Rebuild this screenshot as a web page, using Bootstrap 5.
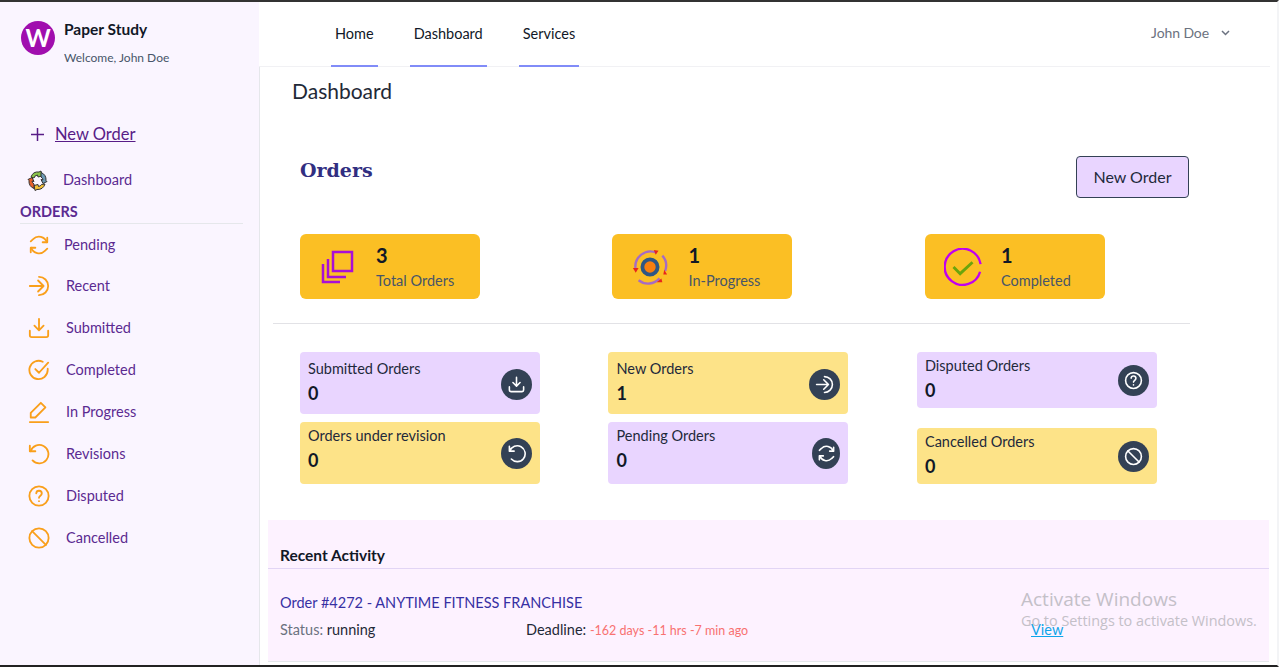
<!DOCTYPE html>
<html lang="en">
<head>
  <meta charset="UTF-8" />
  <meta name="viewport" content="width=device-width, initial-scale=1.0"/>
  <title>Dashboard - Paper Study</title>
  <link href="https://cdn.jsdelivr.net/npm/bootstrap@5.3.0/dist/css/bootstrap.min.css" rel="stylesheet"/>
  <style>
    html, body { height: 100%; }
    body { font-family: Lato, "Open Sans", sans-serif; overflow: hidden; border-top: 2px solid #333; border-bottom: 2px solid #222; border-right: 2px solid #f3f4f6; color: #1e293b; background: #fff; }
    .app-wrap { height: 663px; }

    /* sidebar */
    .side { width: 259px; flex: none; background: #faf5ff; color: #5b2a91; }
    .brand { padding: 19px 0 0 21px; height: 114px; gap: 9px; }
    .brand-logo { width: 34px; height: 34px; background: #a00eae; color: #fff; font-size: 24px; font-weight: 700; line-height: 34px; }
    .brand-name { font-size: 15.5px; font-weight: 700; color: #111827; line-height: 20px; margin-top: -2px; }
    .brand-sub { font-size: 12px; color: #475569; margin-top: 10px; line-height: 18px; }
    .side-new { padding-left: 30px; height: 36px; font-size: 16.5px; gap: 10px; }
    .side-new a { color: #581c87; }
    .side-dash { padding-left: 27px; height: 42px; margin-top: 7px; font-size: 14.5px; gap: 15px; }
    .side-head { margin: 1px 16px 0 20px; padding-bottom: 1px; border-bottom: 1px solid #e5e7eb; font-size: 14.5px; font-weight: 700; line-height: 20px; height: 22px; }
    .side-list { margin: 0; padding: 1px 0 0; list-style: none; }
    .side-list li { height: 42px; padding-left: 28px; font-size: 14.5px; gap: 16px; }
    .side-list li:first-child { height: 40px; gap: 14px; }
    .side-list svg { width: 22px; height: 22px; flex: none; fill: none; stroke: #f99f1b; stroke-width: 2; stroke-linecap: round; stroke-linejoin: round; }

    /* top bar */
    .page { width: 1011px; }
    .topbar { height: 65px; border-bottom: 1px solid #f1f1f4; padding: 0 40px 0 72px; }
    .topnav { gap: 32px; height: 65px; }
    .topnav a { display: flex; align-items: center; padding: 0 4px; color: #111827; text-decoration: none; font-size: 14.5px; border-bottom: 2px solid #818cf8; }
    .user-menu { color: #6b7280; font-size: 14px; gap: 12px; letter-spacing: -.1px; padding-bottom: 3px; }
    .page-body { border-left: 1px solid #e5e7eb; height: 598px; padding-top: 12px; }

    /* page */
    .page-title { padding-left: 32px; font-size: 21px; font-weight: 400; line-height: 24px; margin: 0; color: #1f2937; }
    .orders-head { margin: 53px 0 0 40px; width: 889px; height: 42px; }
    .orders-title { font-family: "DejaVu Serif", serif; font-size: 19px; font-weight: 700; color: #312e81; margin: 2px 0 0; line-height: 24px; }
    .btn-new { width: 113px; height: 42px; padding: 0; background: #e9d5ff; border: 1px solid #334155; color: #1e293b; font-size: 16px; border-radius: 4px; }
    .stat-row { margin: 36px 0 0 40px; width: 937.5px; }
    .stat-box { width: 180px; height: 65px; background: #fbbf24; border-radius: 6px; padding-left: 21px; gap: 20px; }
    .stat-wide { padding-left: 19px; gap: 19px; }
    .stat-num { font-size: 20px; font-weight: 700; line-height: 24px; color: #111827; }
    .stat-label { font-size: 14.5px; line-height: 20px; margin-top: 4px; color: #475569; }
    .divider { margin: 24px 0 0 13px; width: 917px; border-top: 1px solid #e2e2e6; }
    .mini-row { margin: 28px 0 0 40px; width: 925.5px; }
    .mini-col { height: 132px; }
    .mini-box { width: 240px; border-radius: 4px; padding: 8px 8px 0; }
    .mini-tall { height: 62px; }
    .mini-low { padding-top: 5px; }
    .mini-short { height: 56px; padding-top: 5px; }
    .mini-label { font-size: 14.5px; line-height: 18px; color: #1e293b; }
    .mini-num { font-size: 18px; font-weight: 700; line-height: 24px; margin-top: 3px; color: #111827; }
    .tone-violet { background: #e9d5ff; }
    .tone-sand { background: #fde388; }
    .round-ico { width: 31px; height: 31px; flex: none; background: #334155; margin-top: 9px; }
    .mini-low .round-ico { margin-top: 11px; }
    .mini-short .round-ico { margin-top: 8px; }
    .round-ico.round-slim { width: 28px; }
    .round-ico svg { width: 19px; height: 19px; fill: none; stroke: #fff; stroke-width: 2; stroke-linecap: round; stroke-linejoin: round; }
    .recent { margin: 36px 0 0 8px; width: 1001px; height: 142px; background: #fdf2ff; border-bottom: 1px solid #e5e7eb; }
    .recent-head { height: 49px; padding: 25px 0 0 12px; border-bottom: 1px solid #e2d5f5; font-size: 15.5px; font-weight: 700; line-height: 20px; color: #111827; }
    .recent-order { padding: 24px 0 0 12px; font-size: 14.5px; line-height: 20px; color: #3730a3; }
    .recent-meta { padding: 7px 0 0 12px; font-size: 14.5px; line-height: 20px; }
    .meta-status { width: 246px; color: #6b7280; }
    .meta-status b { font-weight: 400; color: #1f2937; }
    .meta-deadline { width: 505px; color: #1f2937; }
    .meta-deadline span { font-size: 12.5px; color: #f87171; }
    .recent-meta a { color: #0ea5e9; }
    .win-mark { position: absolute; left: 1021px; top: 587px; font-family: "Open Sans", sans-serif; color: #c4c0c8; pointer-events: none; }
    .win-mark div:first-child { font-size: 19px; line-height: 24px; }
    .win-mark div:last-child { font-size: 14.4px; line-height: 20px; margin-top: 0; }
  </style>
</head>
<body>
  <div class="app-wrap d-flex">

    <!-- Sidebar -->
    <aside class="side">
      <div class="brand d-flex">
        <div class="brand-logo rounded-circle text-center">W</div>
        <div>
          <div class="brand-name">Paper Study</div>
          <div class="brand-sub">Welcome, John Doe</div>
        </div>
      </div>
      <div class="side-new d-flex align-items-center">
        <svg width="15" height="15" viewBox="0 0 15 15" fill="none" stroke="#581c87" stroke-width="1.5"><path d="M7.5 1v13M1 7.5h13"/></svg>
        <a href="#">New Order</a>
      </div>
      <div class="side-dash d-flex align-items-center">
        <svg width="21" height="21" viewBox="0 0 21 21" stroke="#333" stroke-width="1">
          <path d="M4 7a7.5 7.5 0 0 1 8-5l2-1 1 5-4 1-.5-2A4 4 0 0 0 7 8z" fill="#8bc34a"/>
          <path d="M14 2.5a8 8 0 0 1 5 8l1 1-4 2-2-4 2 .5a4 4 0 0 0-2-3z" fill="#6d9ab5"/>
          <path d="M18 14a8 8 0 0 1-8 5.500l-2 1-1-5 4-1 .5 2a4 4 0 0 0 3-2z" fill="#f2c037"/>
          <path d="M7 18.500a8 8 0 0 1-5-8l-1-1 4-2 2 4-2-.5a4 4 0 0 0 2 3z" fill="#e8622c"/>
        </svg>
        <span>Dashboard</span>
      </div>
      <div class="side-head">ORDERS</div>
      <ul class="side-list">
        <li class="d-flex align-items-center">
          <svg viewBox="0 0 24 24"><path d="M21 4v5h-5M3 20v-5h5"/><path d="M20.500 9A9 9 0 0 0 5.600 5.600L3 8M3.500 15a9 9 0 0 0 14.900 3.400L21 16"/></svg>
          <span>Pending</span>
        </li>
        <li class="d-flex align-items-center">
          <svg viewBox="0 0 24 24"><path d="M2 12h15M11 6l6 6-6 6M12 2a10 10 0 0 1 0 20"/></svg>
          <span>Recent</span>
        </li>
        <li class="d-flex align-items-center">
          <svg viewBox="0 0 24 24"><path d="M12 2v12M7 9.500l5 5 5-5M2 15v5a2 2 0 0 0 2 2h16a2 2 0 0 0 2-2v-5"/></svg>
          <span>Submitted</span>
        </li>
        <li class="d-flex align-items-center">
          <svg viewBox="0 0 24 24"><path d="M21.500 10.500V12A10 10 0 1 1 16 3M8 11l4 4 10-11"/></svg>
          <span>Completed</span>
        </li>
        <li class="d-flex align-items-center">
          <svg viewBox="0 0 24 24"><path d="M2 23h20M3 18v-5L14 2l5 5L8 18z"/></svg>
          <span>In Progress</span>
        </li>
        <li class="d-flex align-items-center">
          <svg viewBox="0 0 24 24"><path d="M2 3v6h6"/><path d="M2.800 9A10 10 0 1 1 5 19"/></svg>
          <span>Revisions</span>
        </li>
        <li class="d-flex align-items-center">
          <svg viewBox="0 0 24 24"><circle cx="12" cy="12" r="10.500"/><path d="M9 9a3 3 0 0 1 6 .5c0 2-3 2.500-3 4.500M12 17.500v.1"/></svg>
          <span>Disputed</span>
        </li>
        <li class="d-flex align-items-center">
          <svg viewBox="0 0 24 24"><circle cx="12" cy="12" r="10.500"/><path d="M4.500 4.500l15 15"/></svg>
          <span>Cancelled</span>
        </li>
      </ul>
    </aside>

    <!-- Main -->
    <main class="page">
      <header class="topbar d-flex justify-content-between">
        <nav class="topnav d-flex">
          <a href="#">Home</a>
          <a href="#">Dashboard</a>
          <a href="#">Services</a>
        </nav>
        <div class="user-menu d-flex align-items-center">
          <span>John Doe</span>
          <svg width="9" height="6" viewBox="0 0 9 6" fill="none" stroke="#6b7280" stroke-width="1.500"><path d="M1 1l3.500 3.500L8 1"/></svg>
        </div>
      </header>

      <div class="page-body">
        <h1 class="page-title">Dashboard</h1>

        <div class="orders-head d-flex justify-content-between">
          <h2 class="orders-title">Orders</h2>
          <button class="btn btn-new">New Order</button>
        </div>

        <div class="stat-row row g-0">
          <div class="col-4">
            <div class="stat-box d-flex align-items-center">
              <svg width="35" height="35" viewBox="0 0 35 35" fill="none" stroke="#a90fd6" stroke-width="2.500"><rect x="12" y="3" width="19" height="19"/><path d="M7 10v18h18M2 15v18h17"/></svg>
              <div>
                <div class="stat-num">3</div>
                <div class="stat-label">Total Orders</div>
              </div>
            </div>
          </div>
          <div class="col-4">
            <div class="stat-box stat-wide d-flex align-items-center">
              <svg width="38" height="38" viewBox="0 0 40 40" fill="none">
                <path d="M5 23A16 16 0 0 1 27 5M33 8a16 16 0 0 1 3 16M30 32a16 16 0 0 1-22 2" stroke="#a66cc4" stroke-width="2.500"/>
                <path d="M24 2l5 1-3 4zM38 28l-4 0 1-5zM27 36l5-4 1 4zM2 21l6 0-3 5z" fill="#e8261b"/>
                <circle cx="20" cy="20" r="8" fill="#f97f0f" stroke="#2f5785" stroke-width="4"/>
              </svg>
              <div>
                <div class="stat-num">1</div>
                <div class="stat-label">In-Progress</div>
              </div>
            </div>
          </div>
          <div class="col-4">
            <div class="stat-box stat-wide d-flex align-items-center">
              <svg width="38" height="38" viewBox="0 0 40 40" fill="none" stroke-width="2.500">
                <path d="M38.500 17A19 19 0 1 0 38 25" stroke="#c000f0"/>
                <path d="M10 20l7 7 13-12" stroke="#6aa50c" stroke-width="3"/>
              </svg>
              <div>
                <div class="stat-num">1</div>
                <div class="stat-label">Completed</div>
              </div>
            </div>
          </div>
        </div>

        <div class="divider"></div>

        <div class="mini-row row g-0">
          <div class="col-4 mini-col d-flex flex-column gap-2">
            <div class="mini-box mini-tall tone-violet d-flex justify-content-between">
              <div><div class="mini-label">Submitted Orders</div><div class="mini-num">0</div></div>
              <div class="round-ico rounded-circle d-flex align-items-center justify-content-center">
                <svg viewBox="0 0 24 24"><path d="M12 3v11M7.500 9.500l4.500 4.500 4.500-4.500M3 15v4a2 2 0 0 0 2 2h14a2 2 0 0 0 2-2v-4"/></svg>
              </div>
            </div>
            <div class="mini-box mini-tall mini-low tone-sand d-flex justify-content-between">
              <div><div class="mini-label">Orders under revision</div><div class="mini-num">0</div></div>
              <div class="round-ico rounded-circle d-flex align-items-center justify-content-center">
                <svg viewBox="0 0 24 24"><path d="M3 3v6h6"/><path d="M3.500 9A10 10 0 1 1 5.500 19"/></svg>
              </div>
            </div>
          </div>
          <div class="col-4 mini-col d-flex flex-column gap-2">
            <div class="mini-box mini-tall tone-sand d-flex justify-content-between">
              <div><div class="mini-label">New Orders</div><div class="mini-num">1</div></div>
              <div class="round-ico rounded-circle d-flex align-items-center justify-content-center">
                <svg viewBox="0 0 24 24"><path d="M2 12h15M11 6l6 6-6 6M12 2a10 10 0 0 1 0 20"/></svg>
              </div>
            </div>
            <div class="mini-box mini-tall mini-low tone-violet d-flex justify-content-between">
              <div><div class="mini-label">Pending Orders</div><div class="mini-num">0</div></div>
              <div class="round-ico round-slim rounded-circle d-flex align-items-center justify-content-center">
                <svg viewBox="0 0 24 24"><path d="M21 4v5h-5M3 20v-5h5"/><path d="M20.500 9A9 9 0 0 0 5.600 5.600L3 8M3.500 15a9 9 0 0 0 14.900 3.400L21 16"/></svg>
              </div>
            </div>
          </div>
          <div class="col-4 mini-col d-flex flex-column justify-content-between">
            <div class="mini-box mini-short tone-violet d-flex justify-content-between">
              <div><div class="mini-label">Disputed Orders</div><div class="mini-num">0</div></div>
              <div class="round-ico rounded-circle d-flex align-items-center justify-content-center">
                <svg viewBox="0 0 24 24"><circle cx="12" cy="12" r="10"/><path d="M9 9a3 3 0 0 1 6 .5c0 2-3 2.500-3 4.500M12 17.500v.1"/></svg>
              </div>
            </div>
            <div class="mini-box mini-short tone-sand d-flex justify-content-between">
              <div><div class="mini-label">Cancelled Orders</div><div class="mini-num">0</div></div>
              <div class="round-ico rounded-circle d-flex align-items-center justify-content-center">
                <svg viewBox="0 0 24 24"><circle cx="12" cy="12" r="10"/><path d="M5 5l14 14"/></svg>
              </div>
            </div>
          </div>
        </div>

        <section class="recent">
          <div class="recent-head">Recent Activity</div>
          <div class="recent-order">Order #4272 - ANYTIME FITNESS FRANCHISE</div>
          <div class="recent-meta d-flex">
            <div class="meta-status">Status: <b>running</b></div>
            <div class="meta-deadline">Deadline: <span>-162 days -11 hrs -7 min ago</span></div>
            <a href="#">View</a>
          </div>
        </section>
      </div>
    </main>
  </div>

  <div class="win-mark">
    <div>Activate Windows</div>
    <div>Go to Settings to activate Windows.</div>
  </div>

  <script src="https://cdn.jsdelivr.net/npm/bootstrap@5.3.0/dist/js/bootstrap.bundle.min.js"></script>
</body>
</html>
